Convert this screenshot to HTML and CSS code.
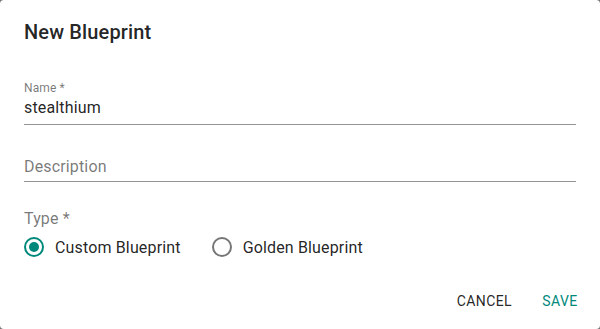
FILE: index.html
```html
<!DOCTYPE html>
<html lang="en">
<head>
    <meta charset="UTF-8">
    <meta name="viewport" content="width=device-width, initial-scale=1.0">
    <title>New Blueprint</title>
    <link rel="stylesheet" href="styles.css">
</head>
<body>
    <div class="dialog">
        <h2 class="title">New Blueprint</h2>
        <div class="content">
            <div class="field">
                <label class="label">Name *</label>
                <div class="input">stealthium</div>
            </div>
            <div class="field field-empty">
                <div class="input placeholder">Description</div>
            </div>
            <div class="type">
                <div class="type-label">Type *</div>
                <div class="radios">
                    <div class="radio checked">
                        <span class="circle"><span class="dot"></span></span>
                        <span class="radio-label">Custom Blueprint</span>
                    </div>
                    <div class="radio">
                        <span class="circle"></span>
                        <span class="radio-label">Golden Blueprint</span>
                    </div>
                </div>
            </div>
        </div>
        <div class="actions">
            <button class="btn">CANCEL</button>
            <button class="btn primary">SAVE</button>
        </div>
    </div>
</body>
</html>
```

FILE: styles.css
```css
html, body {
    margin: 0;
    height: 100%;
}
body {
    background: #737373;
    font-family: Roboto, "Liberation Sans", sans-serif;
    color: rgba(0,0,0,0.87);
}
.dialog {
    background: #fff;
    border-radius: 4px;
    height: 329px;
    box-sizing: border-box;
    display: flex;
    flex-direction: column;
}
.title {
    margin: 0;
    padding: 16px 24px 0;
    font-size: 20px;
    font-weight: 500;
    line-height: 32px;
    letter-spacing: 0.15px;
}
.content {
    padding: 32px 24px 0;
}
.field {
    border-bottom: 1px solid rgba(0,0,0,0.42);
}
.label {
    display: block;
    font-size: 12px;
    line-height: 16px;
    letter-spacing: 0.1px;
    color: rgba(0,0,0,0.54);
    margin-bottom: 2px;
}
.input {
    font-size: 16px;
    line-height: 19px;
    letter-spacing: 0.15px;
    padding-bottom: 7px;
}
.field-empty {
    margin-top: 32px;
}
.field-empty .input {
    padding-bottom: 5px;
}
.placeholder {
    color: rgba(0,0,0,0.54);
}
.type {
    margin-top: 27px;
}
.type-label {
    font-size: 16px;
    line-height: 19px;
    letter-spacing: 0.15px;
    color: rgba(0,0,0,0.54);
}
.radios {
    display: flex;
    gap: 31px;
    margin-top: 7px;
}
.radio {
    display: flex;
    align-items: center;
    gap: 11px;
    height: 24px;
}
.circle {
    width: 20px;
    height: 20px;
    box-sizing: border-box;
    border: 2px solid rgba(0,0,0,0.54);
    border-radius: 50%;
    display: flex;
    align-items: center;
    justify-content: center;
}
.checked .circle {
    border-color: #00897b;
}
.dot {
    width: 10px;
    height: 10px;
    border-radius: 50%;
    background: #00897b;
}
.radio-label {
    font-size: 16px;
    line-height: 19px;
    letter-spacing: 0.15px;
    padding-top: 1px;
}
.actions {
    margin-top: auto;
    display: flex;
    justify-content: flex-end;
    gap: 8px;
    padding: 0 8px 12px;
}
.btn {
    min-width: 64px;
    padding: 6px 8px;
    border: none;
    background: none;
    font-family: inherit;
    font-size: 14px;
    line-height: 20px;
    letter-spacing: 0.4px;
    color: rgba(0,0,0,0.87);
    cursor: pointer;
}
.primary {
    color: #00897b;
}
```
